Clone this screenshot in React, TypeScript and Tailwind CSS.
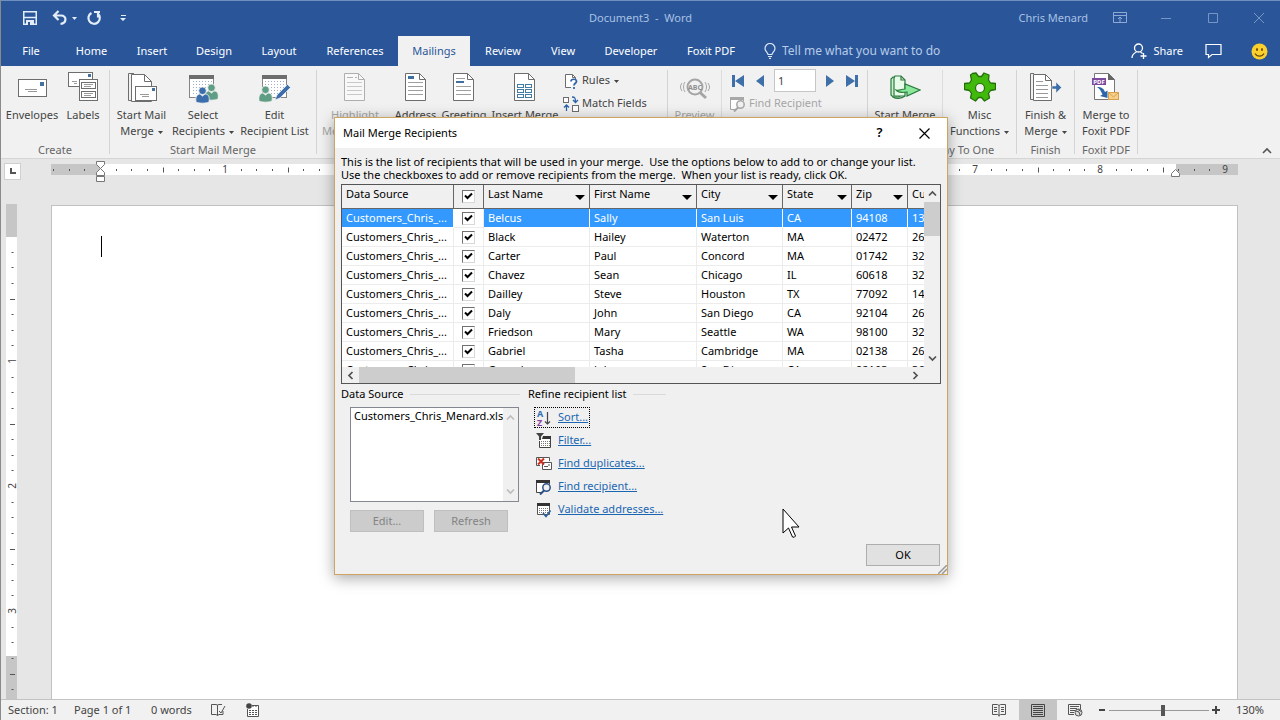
import React from "react";
import clsx from "clsx";

const TABS = [
  { title: "File", width: "w-[60px]" },
  { title: "Home", width: "w-[61px]" },
  { title: "Insert", width: "w-[60px]" },
  { title: "Design", width: "w-[64px]" },
  { title: "Layout", width: "w-[66px]" },
  { title: "References", width: "w-[86px]" },
  { title: "Mailings", width: "w-[72px]" },
  { title: "Review", width: "w-[66px]" },
  { title: "View", width: "w-[54px]" },
  { title: "Developer", width: "w-[82px]" },
  { title: "Foxit PDF", width: "w-[78px]" },
];

const COLUMNS = [
  { title: "Last Name", width: "w-[106px]" },
  { title: "First Name", width: "w-[107px]" },
  { title: "City", width: "w-[86px]" },
  { title: "State", width: "w-[69px]" },
  { title: "Zip", width: "w-[56px]" },
  { title: "Cu", width: "w-[40px]" },
];

const RECIPIENTS = [
  ["Belcus", "Sally", "San Luis", "CA", "94108", "13"],
  ["Black", "Hailey", "Waterton", "MA", "02472", "26"],
  ["Carter", "Paul", "Concord", "MA", "01742", "32"],
  ["Chavez", "Sean", "Chicago", "IL", "60618", "32"],
  ["Dailley", "Steve", "Houston", "TX", "77092", "14"],
  ["Daly", "John", "San Diego", "CA", "92104", "26"],
  ["Friedson", "Mary", "Seattle", "WA", "98100", "32"],
  ["Gabriel", "Tasha", "Cambridge", "MA", "02138", "26"],
  ["Gonzalez", "John", "San Diego", "CA", "92103", "36"],
];

const Caret = () => (
  <svg width="5" height="3" viewBox="0 0 5 3" className="ml-1 inline-block align-middle">
    <path d="M0 0h5L2.500 3z" fill="currentColor" />
  </svg>
);

/* ---------- ribbon icons ---------- */

const EnvelopeIcon = () => (
  <svg width="32" height="32" fill="none" stroke="#6d6d6d">
    <rect x="2.500" y="7.500" width="28" height="17" fill="#fff" />
    <rect x="24" y="10" width="4" height="4" fill="#41719c" stroke="none" />
    <path d="M9 17.500h12M12 19.500h9" stroke="#9a9a9a" />
  </svg>
);

const LabelsIcon = () => (
  <svg width="32" height="32" fill="none" stroke="#6d6d6d">
    <rect x="1.500" y="0.500" width="24" height="14" fill="#fff" />
    <rect x="21" y="2" width="3" height="3" fill="#41719c" stroke="none" />
    <path d="M5 9.500h5M7 11.500h3" stroke="#9a9a9a" />
    <rect x="12.500" y="7.500" width="18" height="21" fill="#fff" />
    <rect x="14.500" y="10.500" width="14" height="6" />
    <rect x="14.500" y="19.500" width="14" height="6" />
    <path d="M17 12.500h9M17 14.500h7M17 21.500h9M17 23.500h7" stroke="#9a9a9a" />
  </svg>
);

const StartMailMergeIcon = () => (
  <svg width="32" height="32" fill="none" stroke="#6d6d6d">
    <path d="M8 1.500H2.500v27H6" />
    <path d="M5.500 2.500h13l7 7v20h-20z" fill="#fff" />
    <path d="M18.500 2.500v7h7" />
    <rect x="9.500" y="14.500" width="21" height="14" fill="#fff" />
    <rect x="26" y="16" width="3" height="3" fill="#41719c" stroke="none" />
    <path d="M14 22.500h9M16 24.500h7" stroke="#9a9a9a" />
  </svg>
);

const PersonShape = ({ x, y, color }: { x: number; y: number; color: string }) => (
  <g transform={`translate(${x} ${y})`} fill={color} stroke="#f1f1f1" strokeWidth="0.800">
    <path d="M0 15c-1-6 2-8 4-8l2.500 2L9 7c3 0 5 2 4 8-2 1.500-11 1.500-13 0z" />
    <circle cx="6.500" cy="3.800" r="3.800" />
  </g>
);

const DotGrid = () => (
  <path
    d="M6 9.500h20M6 12.500h20M6 15.500h20M6 18.500h20M6 21.500h20"
    stroke="#9dafc4"
    strokeDasharray="1 2"
  />
);

const SelectRecipientsIcon = () => (
  <svg width="32" height="32" fill="none">
    <rect x="2.500" y="3.500" width="24" height="22" fill="#fff" stroke="#858585" />
    <path d="M2 3h25v4H2z" fill="#6d6d6d" />
    <DotGrid />
    <PersonShape x={18} y={12} color="#5f9e84" />
    <PersonShape x={9} y={15} color="#3c6eab" />
  </svg>
);

const EditRecipientsIcon = () => (
  <svg width="32" height="32" fill="none">
    <rect x="3.500" y="3.500" width="24" height="22" fill="#fff" stroke="#858585" />
    <path d="M3 3h25v4H3z" fill="#6d6d6d" />
    <DotGrid />
    <PersonShape x={0} y={14} color="#5f9e84" />
    <path d="M16 28l2-5L28.500 12.500l3 3L21 26z" fill="#3c6eab" stroke="#f1f1f1" strokeWidth="0.700" />
  </svg>
);

const PageIcon = ({ kind }: { kind: "highlight" | "address" | "greeting" | "field" }) => (
  <svg width="32" height="32" fill="none" className={kind === "highlight" ? "opacity-50" : ""}>
    <path d="M5.500 1.500h14l6 6v21h-20z" fill="#fff" stroke="#6d6d6d" />
    <path d="M19.500 1.500v6h6" stroke="#6d6d6d" />
    {kind === "field" ? (
      <g stroke="#3f7ba5">
        <rect x="8.500" y="12.500" width="6" height="3" />
        <rect x="16.500" y="12.500" width="6" height="3" />
        <rect x="8.500" y="17.500" width="6" height="3" />
        <rect x="16.500" y="17.500" width="6" height="3" />
        <rect x="8.500" y="22.500" width="6" height="3" />
        <rect x="16.500" y="22.500" width="6" height="3" />
      </g>
    ) : (
      <>
        <path
          d={kind === "greeting" ? "M8 6.500h9M8 14.500h15M8 18.500h15M8 22.500h15" : "M8 10.500h15M8 14.500h15M8 18.500h15M8 22.500h15"}
          stroke="#a0a0a0"
        />
        {kind === "address" && <path d="M8 4h6v3H8z" fill="#3f6f9f" />}
        {kind === "greeting" && <path d="M8 9h8v2H8z" fill="#3f6f9f" />}
        {kind === "highlight" && <path d="M8 5h6v1H8zM16 5h2v1h-2z" fill="#777" />}
      </>
    )}
  </svg>
);

const RulesIcon = () => (
  <svg width="16" height="16" fill="none">
    <path d="M8 14.500H2.500v-13h7l3 3v2" fill="#fff" stroke="#6d6d6d" />
    <path d="M9.500 1.500v3h3" stroke="#6d6d6d" />
    <path d="M8 8.500c0-3 5.500-3 5.500 0 0 2-2.500 1.500-2.500 4M11 14v2" stroke="#2b62a8" strokeWidth="1.700" />
  </svg>
);

const MatchIcon = () => (
  <svg width="16" height="16" fill="none" stroke="#6d6d6d">
    <rect x="0.500" y="1.500" width="5" height="5" fill="#fff" />
    <rect x="9.500" y="9.500" width="6" height="6" fill="#fff" />
    <path d="M9 1c3 0 3.500 1 3.500 5M10 4l2.500 2.500L15 4M3.500 15V9.500M1 11.500L3.500 9 6 11.500" stroke="#2b62a8" strokeWidth="1.300" />
  </svg>
);

const UpdateIcon = () => (
  <svg width="16" height="16" fill="none" stroke="#a0a0a0">
    <rect x="1.500" y="2.500" width="12" height="11" fill="#fff" />
    <path d="M4 6.500h7M4 9.500h7" />
  </svg>
);

const PreviewIcon = () => (
  <svg width="32" height="32" fill="none" stroke="#a5a5a5">
    <circle cx="16" cy="15" r="7.500" strokeWidth="2" fill="#f1f1f1" />
    <path d="M21 20.500l6 5.500" strokeWidth="3" />
    <path d="M6 10c-2 3-2 7 0 10M3 11c-2 3-2 5 0 8M26 10c2 3 2 7 0 10M29 11c2 3 2 5 0 8" />
    <text x="16" y="18" fontSize="7" fontWeight="700" textAnchor="middle" fill="#8f8f8f" stroke="none">
      ABC
    </text>
  </svg>
);

const FindIcon = ({ muted }: { muted?: boolean }) => (
  <svg width="16" height="16" fill="none" stroke={muted ? "#a8a8a8" : "#444"}>
    <path d="M5 13.500H0.500v-12h13V5" fill="#fff" />
    <path d="M0 1h14v3H0z" fill={muted ? "#a8a8a8" : "#333"} stroke="none" />
    <circle cx="10.500" cy="8.500" r="3.700" fill="#f1f1f1" stroke={muted ? "#a8a8a8" : "#2c4f86"} strokeWidth="1.500" />
    <path d="M8 11.500L4 15.500" stroke={muted ? "#a8a8a8" : "#2c4f86"} strokeWidth="2" />
  </svg>
);

const StartMergeIcon = () => (
  <svg width="32" height="32" fill="none" stroke="#2a7a3e" strokeWidth="1.200">
    <path d="M4 5h6l2 2v16l-2 2H4L2 23V7z" fill="#c9efce" />
    <path d="M6 4h6l4 4v16H5V6z" fill="#e8fbe9" />
    <path d="M12 4v4h4" />
    <path d="M7 18c3 1 5-1 9-1v-5l15 6-13 6v-4c-4 0-8 2-11-2z" fill="#8be79a" />
    <path d="M4 25c3 2 8 2 12-1" />
  </svg>
);

const GearIcon = () => (
  <svg width="32" height="32" viewBox="-16 -16 32 32">
    <path
      d="M-7.500-14.500l3.500-0.500 2.500 3.500h3l2.500-3.500 5 2-0.500 5 2 3 5 0.500v6l-5 1-2 3 1 4.500-5 3-3-3.500h-3l-3 3.500-5-3 1-4.500-2-3-5-1v-6l5-0.500 2-3-1-5z"
      fill="#41b80c"
      stroke="#256f0b"
      strokeWidth="1.300"
      strokeLinejoin="round"
    />
    <circle r="4.500" fill="#f1f1f1" stroke="#256f0b" strokeWidth="1.200" />
  </svg>
);

const FinishIcon = () => (
  <svg width="32" height="32" fill="none" stroke="#6d6d6d">
    <path d="M4 1.500H0.500v26H3" />
    <path d="M3.500 2.500h12l6 6v20h-18z" fill="#fff" />
    <path d="M15.500 2.500v6h6" />
    <path d="M6 9.500h7M6 13.500h12M6 17.500h12M6 21.500h12M6 25.500h12" stroke="#999" />
    <path d="M22 14h4v-4l5.500 5.500L26 21v-4h-4z" fill="#3c6eab" stroke="#f1f1f1" strokeWidth="0.500" />
  </svg>
);

const FoxitIcon = () => (
  <svg width="32" height="32" fill="none">
    <path d="M4.500 1.500h14l6 6v20h-20z" fill="#fff" stroke="#777" />
    <path d="M18 1l7 7h-7z" fill="#666" />
    <path d="M2 6h14v7H2z" fill="#7d4aa0" />
    <text x="9" y="12" fontSize="6" fontWeight="700" textAnchor="middle" fill="#fff">
      PDF
    </text>
    <path d="M7 15c5 0 7 2 8 5l2.500-1.500V26L10 24l2.500-1.500C11 19 10 17 7 15z" fill="#2f66a8" />
    <rect x="18.500" y="20.500" width="10" height="7" fill="#f6d08b" stroke="#d9a04a" />
    <path d="M19 21l4.500 4L28 21" stroke="#d9a04a" />
  </svg>
);

/* ---------- ribbon pieces ---------- */

type RibbonButtonProps = {
  icon: React.ReactNode;
  lines: [string, string?];
  width: string;
  caret?: boolean;
  muted?: boolean;
};

const RibbonButton = ({ icon, lines, width, caret, muted }: RibbonButtonProps) => (
  <button
    className={clsx(
      "flex shrink-0 flex-col items-center pt-[6px] leading-4 whitespace-nowrap",
      width,
      muted ? "text-[#a6a6a6]" : "text-[#444]"
    )}
  >
    <span className="mb-[3px] h-8">{icon}</span>
    <span>{lines[0]}</span>
    <span>
      {lines[1]}
      {caret && <Caret />}
    </span>
  </button>
);

const SmallButton = ({
  icon,
  title,
  caret,
  muted,
}: {
  icon: React.ReactNode;
  title: string;
  caret?: boolean;
  muted?: boolean;
}) => (
  <button
    className={clsx(
      "flex h-[23px] items-center gap-[3px] whitespace-nowrap",
      muted ? "text-[#a6a6a6]" : "text-[#444]"
    )}
  >
    {icon}
    <span>
      {title}
      {caret && <Caret />}
    </span>
  </button>
);

const RibbonGroup = ({
  title,
  width,
  children,
}: {
  title: string;
  width: string;
  children: React.ReactNode;
}) => (
  <>
    <div className={clsx("flex shrink-0 flex-col", width)}>
      <div className="flex h-[76px] justify-center">{children}</div>
      <div className="h-4 text-center leading-4 whitespace-nowrap text-[#666]">{title}</div>
    </div>
    <div className="my-1 w-px shrink-0 bg-[#d4d4d4]" />
  </>
);

const NavArrow = ({ label, d }: { label: string; d: string }) => (
  <button aria-label={label}>
    <svg width="14" height="14" fill="#3f6fa8">
      <path d={d} />
    </svg>
  </button>
);

const Ribbon = () => (
  <div className="flex h-[93px] shrink-0 overflow-hidden border-b border-[#d5d5d5] bg-[#f1f1f1] text-[11px]">
    <RibbonGroup title="Create" width="w-[108px]">
      <RibbonButton icon={<EnvelopeIcon />} lines={["Envelopes"]} width="w-[56px]" />
      <RibbonButton icon={<LabelsIcon />} lines={["Labels"]} width="w-[46px]" />
    </RibbonGroup>
    <RibbonGroup title="Start Mail Merge" width="w-[206px]">
      <RibbonButton icon={<StartMailMergeIcon />} lines={["Start Mail", "Merge"]} width="w-[60px]" caret />
      <RibbonButton icon={<SelectRecipientsIcon />} lines={["Select", "Recipients"]} width="w-[63px]" caret />
      <RibbonButton icon={<EditRecipientsIcon />} lines={["Edit", "Recipient List"]} width="w-[80px]" />
    </RibbonGroup>
    <RibbonGroup title="Write & Insert Fields" width="w-[350px]">
      <RibbonButton icon={<PageIcon kind="highlight" />} lines={["Highlight", "Merge Fields"]} width="w-[76px]" muted />
      <RibbonButton icon={<PageIcon kind="address" />} lines={["Address", "Block"]} width="w-[45px]" />
      <RibbonButton icon={<PageIcon kind="greeting" />} lines={["Greeting", "Line"]} width="w-[52px]" />
      <RibbonButton icon={<PageIcon kind="field" />} lines={["Insert Merge", "Field"]} width="w-[70px]" caret />
      <div className="flex flex-1 flex-col pt-[3px] pl-[3px]">
        <SmallButton icon={<RulesIcon />} title="Rules" caret />
        <SmallButton icon={<MatchIcon />} title="Match Fields" />
        <SmallButton icon={<UpdateIcon />} title="Update Labels" muted />
      </div>
    </RibbonGroup>
    <RibbonGroup title="Preview Results" width="w-[199px]">
      <RibbonButton icon={<PreviewIcon />} lines={["Preview", "Results"]} width="w-[53px]" muted />
      <div className="my-1 w-px bg-[#dcdcdc]" />
      <div className="flex flex-1 flex-col pt-[3px] pl-2">
        <div className="flex h-[23px] items-center gap-2">
          <NavArrow label="First record" d="M2 1h3v12H2zM14 1v12L5 7z" />
          <NavArrow label="Previous record" d="M12 1v12L4 7z" />
          <input
            aria-label="Record"
            defaultValue="1"
            className="h-[23px] w-[42px] border border-[#c6c6c6] bg-white px-[3px] text-[#444]"
          />
          <NavArrow label="Next record" d="M2 1v12l8-6z" />
          <NavArrow label="Last record" d="M12 1H9v12h3zM0 1v12l9-6z" />
        </div>
        <SmallButton icon={<FindIcon muted />} title="Find Recipient" muted />
        <SmallButton icon={<UpdateIcon />} title="Check for Errors" muted />
      </div>
    </RibbonGroup>
    <RibbonGroup title="Merge Many To One" width="w-[148px]">
      <RibbonButton icon={<StartMergeIcon />} lines={["Start Merge", "To One"]} width="w-[74px]" />
      <div className="my-1 w-px bg-[#dcdcdc]" />
      <RibbonButton icon={<GearIcon />} lines={["Misc", "Functions"]} width="w-[73px]" caret />
    </RibbonGroup>
    <RibbonGroup title="Finish" width="w-[57px]">
      <RibbonButton icon={<FinishIcon />} lines={["Finish &", "Merge"]} width="w-[57px]" caret />
    </RibbonGroup>
    <RibbonGroup title="Foxit PDF" width="w-[62px]">
      <RibbonButton icon={<FoxitIcon />} lines={["Merge to", "Foxit PDF"]} width="w-[62px]" />
    </RibbonGroup>
    <button aria-label="Collapse the ribbon" className="mt-auto mr-2 mb-1 ml-auto">
      <svg width="10" height="7" fill="none" stroke="#555" strokeWidth="1.600">
        <path d="M1 6l4-4 4 4" />
      </svg>
    </button>
  </div>
);

/* ---------- title bar and tabs ---------- */

const TitleBar = () => (
  <div className="grid h-[35px] shrink-0 grid-cols-[1fr_auto_1fr] items-center border-t border-[#6f8fc0] text-[11px] text-[#a9c1e4]">
    <div className="flex items-center pl-[21px] text-[#e3ecf8]">
      <button aria-label="Save">
        <svg width="16" height="16" fill="none" stroke="currentColor" strokeWidth="1.500">
          <path d="M1.750 1.750h12.500v12.500H1.750z" />
          <path d="M2 7.500h12" />
          <path d="M4 10h8v4H4z" fill="currentColor" stroke="none" />
          <path d="M6 12h2v3H6z" fill="#2a5699" stroke="none" />
        </svg>
      </button>
      <button aria-label="Undo" className="ml-[13px] flex items-center">
        <svg width="17" height="16" fill="none" stroke="currentColor" strokeWidth="2.200">
          <path d="M7.500 1L3 5.500 7.500 10M3 5.500h7c6 0 6 7.500-0.500 8.500" />
        </svg>
        <Caret />
      </button>
      <button aria-label="Repeat" className="ml-[9px]">
        <svg width="16" height="16" fill="none" stroke="currentColor" strokeWidth="2.200">
          <path d="M5.500 3a5.700 5.700 0 1 0 6 0.500M8 2h6M12 1.500v6" />
        </svg>
      </button>
      <button aria-label="Customize" className="ml-[18px]">
        <svg width="7" height="8" fill="currentColor">
          <path d="M1 1h5v1H1zM0 4h6L3 7z" />
        </svg>
      </button>
    </div>
    <div className="whitespace-pre">Document3  -  Word</div>
    <div className="flex items-center justify-end pr-4">
      <span className="mr-[25px]">Chris Menard</span>
      <button aria-label="Ribbon display options" className="mr-[34px]">
        <svg width="14" height="12" fill="none" stroke="currentColor" className="opacity-80">
          <path d="M0.500 0.500h13v10H0.500zM0 3.500h14M7 10V5M5 7l2-2 2 2" />
        </svg>
      </button>
      <button aria-label="Minimize" className="mr-[37px]">
        <svg width="10" height="10" stroke="currentColor" className="opacity-60">
          <path d="M0 5.500h10" />
        </svg>
      </button>
      <button aria-label="Maximize" className="mr-[36px]">
        <svg width="10" height="10" fill="none" stroke="currentColor" className="opacity-60">
          <path d="M0.500 0.500h9v9h-9z" />
        </svg>
      </button>
      <button aria-label="Close">
        <svg width="10" height="10" stroke="currentColor" className="opacity-60">
          <path d="M0 0l10 10M10 0L0 10" />
        </svg>
      </button>
    </div>
  </div>
);

const TabBar = () => (
  <div className="flex h-[31px] shrink-0 items-end text-[12px] whitespace-nowrap text-white">
    {TABS.map((tab) => (
      <button
        key={tab.title}
        className={clsx(
          "h-[30px] shrink-0 text-[11px]",
          tab.width,
          tab.title === "Mailings" ? "bg-[#f1f1f1] text-[#2a5699]" : "text-white"
        )}
      >
        {tab.title}
      </button>
    ))}
    <label className="ml-[14px] flex h-[30px] items-center gap-[6px]">
      <svg width="12" height="16" fill="none" stroke="#dbe6f5" strokeWidth="1.200">
        <path d="M4 11.500c0-2-3-3-3-6a5 5 0 0 1 10 0c0 3-3 4-3 6zM4 13.500h4M5 15.400h2" />
      </svg>
      <input
        placeholder="Tell me what you want to do"
        className="w-[170px] bg-transparent outline-none placeholder:text-[#b7cbe8]"
      />
    </label>
    <div className="ml-auto flex h-[30px] items-center pr-3 text-[11px]">
      <button className="flex items-center gap-[6px]">
        <svg width="16" height="16" fill="none" stroke="#fff" strokeWidth="1.300">
          <circle cx="7.500" cy="5" r="4" />
          <path d="M1 15c0-3 2-5 4.500-6M9.500 9l2 1.500M12.500 10v6M9.500 13h6" />
        </svg>
        Share
      </button>
      <button aria-label="Comments" className="ml-[22px]">
        <svg width="17" height="16" fill="none" stroke="#fff" strokeWidth="1.200">
          <path d="M1 1.500h15v10H7l-3.500 3v-3H1z" />
        </svg>
      </button>
      <button aria-label="Feedback" className="ml-[29px]">
        <svg width="17" height="17">
          <circle cx="8.500" cy="8.500" r="8" fill="#fbd02d" />
          <ellipse cx="6" cy="6.500" rx="1" ry="1.600" fill="#6b4a0c" />
          <ellipse cx="11" cy="6.500" rx="1" ry="1.600" fill="#6b4a0c" />
          <path d="M4 10.500c2 3.500 7 3.500 9 0" fill="none" stroke="#6b4a0c" strokeWidth="1.200" />
        </svg>
      </button>
    </div>
  </div>
);

/* ---------- rulers and page ---------- */

const INCH = 125;

const RulerMarks = ({ from, to, zero, vertical }: { from: number; to: number; zero: number; vertical?: boolean }) => {
  const marks: number[] = [];
  for (let i = from; i <= to; i++) marks.push(i);

  return (
    <svg className="absolute inset-0 h-full w-full overflow-visible" stroke="#555" fill="#444">
      {marks.map((i) => {
        const pos = Math.round(zero + (i * INCH) / 8);
        if (i === 0) return null;
        if (i % 8 === 0) {
          return vertical ? (
            <text key={i} fontSize="10" stroke="none" textAnchor="middle" transform={`translate(10 ${pos}) rotate(-90)`}>
              {Math.abs(i / 8)}
            </text>
          ) : (
            <text key={i} x={pos} y="9" fontSize="10" stroke="none" textAnchor="middle">
              {Math.abs(i / 8)}
            </text>
          );
        }
        const half = i % 4 === 0 ? 2.5 : 1;
        return vertical ? (
          <path key={i} d={`M${6.5 - half} ${pos + 0.5}h${half * 2}`} />
        ) : (
          <path key={i} d={`M${pos + 0.5} ${6 - half}v${half * 2}`} />
        );
      })}
    </svg>
  );
};

const HorizontalRuler = () => (
  <div className="flex h-[25px] shrink-0 pt-[4px]">
    <div className="ml-[3px] flex h-[17px] w-[17px] items-center justify-center border border-[#d0d0d0] bg-white">
      <svg width="7" height="7" fill="none" stroke="#555" strokeWidth="2">
        <path d="M2 0v5h5" />
      </svg>
    </div>
    <div className="relative mt-[1px] mr-[42px] ml-[30px] flex h-[11px] flex-1">
      <div className="w-[50px] bg-[#c6c6c6]" />
      <div className="flex-1 bg-white" />
      <div className="w-[62px] bg-[#c6c6c6]" />
      <RulerMarks from={-3} to={72} zero={49} />
      {/* indent markers */}
      <svg width="9" height="22" fill="#fff" stroke="#777" className="absolute -top-[3px] left-[45px]">
        <path d="M0.500 0.500h8v3l-4 4-4-4zM4.500 7.500l4 4v3h-8v-3zM0.500 15.500h8v5h-8z" />
      </svg>
      <svg width="9" height="8" fill="#fff" stroke="#777" className="absolute top-[5px] right-[58px]">
        <path d="M4.500 0.500l4 4v3h-8v-3z" />
      </svg>
    </div>
  </div>
);

const DocumentArea = () => (
  <div className="flex min-h-0 flex-1 overflow-hidden">
    <div className="relative mt-5 ml-[5px] flex w-[11px] shrink-0 flex-col">
      <div className="h-[33px] bg-[#c6c6c6]" />
      <div className="h-[419px] bg-white" />
      <div className="flex-1 bg-[#c6c6c6]" />
      <RulerMarks from={1} to={29} zero={32} vertical />
    </div>
    <div className="mt-[21px] mr-[42px] ml-[34px] flex-1 border border-b-0 border-[#c1c1c1] bg-white pt-[30px] pl-[49px]">
      <div className="h-[21px] w-px bg-black" />
    </div>
  </div>
);

const StatusBar = () => (
  <div className="flex h-[21px] shrink-0 items-center border-t border-[#c3c3c3] bg-[#f1f1f1] pl-[7px] text-[11px] text-[#444]">
    <span className="w-[66px]">Section: 1</span>
    <span className="w-[77px]">Page 1 of 1</span>
    <span className="w-[59px]">0 words</span>
    <button aria-label="Proofing">
      <svg width="16" height="14" fill="none" stroke="#555">
        <path d="M7.500 12.500V2L6 1.500H1.500v10H6l1.500 1 1.500-1h4V8M7.500 2L9 1.500h3M9 8l2 2 4-7" />
      </svg>
    </button>
    <button aria-label="Record macro" className="ml-[20px]">
      <svg width="14" height="14" fill="none" stroke="#555">
        <path d="M1.500 6v7.500h11v-11H6" fill="#fff" />
        <path d="M6 3h6.500M3 7.500h8M3 9.500h8M3 11.500h8" strokeDasharray="2 1" />
        <circle cx="3" cy="3" r="2.800" fill="#444" stroke="none" />
      </svg>
    </button>
    <div className="ml-auto flex h-full items-center pr-[16px]">
      <button aria-label="Read mode" className="mr-[13px]">
        <svg width="14" height="13" fill="none" stroke="#555">
          <path d="M7 12.500v-11L5.500 0.500h-5v10h5l1.500 1 1.500-1h5v-10h-5L7 1.500M2 3.500h3M2 5.500h3M2 7.500h3M9 3.500h3M9 5.500h3M9 7.500h3" />
        </svg>
      </button>
      <button aria-label="Print layout" className="flex h-full w-[38px] items-center justify-center bg-[#c5c5c5]">
        <svg width="14" height="13" fill="none" stroke="#444">
          <path d="M0.500 0.500h13v12h-13zM2 2.500h10M2 4.500h10M2 6.500h10M2 8.500h10M2 10.500h10" />
        </svg>
      </button>
      <button aria-label="Web layout" className="ml-[11px]">
        <svg width="15" height="13" fill="none" stroke="#555">
          <path d="M6 10.500H0.500v-10h12V5M2 2.500h9M2 4.500h7M2 6.500h5M2 8.500h4" />
          <circle cx="10.500" cy="8.500" r="3.500" fill="#ddd" />
          <path d="M8 7l3 1 1 3M10 5.500l3 2" />
        </svg>
      </button>
      <button aria-label="Zoom out" className="ml-[15px]">
        <svg width="8" height="8" stroke="#444" strokeWidth="2">
          <path d="M1 4h6" />
        </svg>
      </button>
      <input
        type="range"
        aria-label="Zoom"
        defaultValue={54}
        className="mx-[3px] h-3 w-[100px] appearance-none bg-transparent [&::-webkit-slider-runnable-track]:h-px [&::-webkit-slider-runnable-track]:bg-[#999] [&::-webkit-slider-thumb]:-mt-[5px] [&::-webkit-slider-thumb]:h-[11px] [&::-webkit-slider-thumb]:w-[4px] [&::-webkit-slider-thumb]:appearance-none [&::-webkit-slider-thumb]:bg-[#555]"
      />
      <button aria-label="Zoom in" className="mr-[16px]">
        <svg width="8" height="8" stroke="#444" strokeWidth="2">
          <path d="M0 4h8M4 0v8" />
        </svg>
      </button>
      <span>130%</span>
    </div>
  </div>
);

/* ---------- dialog ---------- */

const CheckBox = ({ label }: { label: string }) => (
  <label className="relative mx-auto block h-[13px] w-[13px]">
    <input
      type="checkbox"
      defaultChecked
      aria-label={label}
      className="peer block h-[13px] w-[13px] appearance-none border border-t-[#707070] border-r-[#d8d8d8] border-b-[#d8d8d8] border-l-[#707070] bg-white"
    />
    <svg
      width="9"
      height="8"
      fill="none"
      stroke="#000"
      strokeWidth="2"
      className="pointer-events-none absolute top-[2px] left-[2px] hidden peer-checked:block"
    >
      <path d="M1 3.500l2.500 2.500L8 1.500" />
    </svg>
  </label>
);

const Chevron = ({ d, color = "#505050" }: { d: string; color?: string }) => (
  <svg width="9" height="9" fill="none" stroke={color} strokeWidth="1.700">
    <path d={d} />
  </svg>
);

const UP = "M1 6.500L4.500 3 8 6.500";
const DOWN = "M1 2.500L4.500 6 8 2.500";

const RecipientTable = () => (
  <div className="grid h-[200px] grid-cols-[1fr_16px] grid-rows-[1fr_16px] border border-[#555] bg-[#f0f0f0] text-[11px]">
    <div className="overflow-hidden bg-white">
      <table className="w-[606px] table-fixed border-separate border-spacing-0 text-black">
        <thead>
          <tr className="h-[24px] bg-[#f0f0f0] text-left">
            <th className="w-[112px] border-r border-b border-[#666] p-0 pb-1 pl-1 font-normal">Data Source</th>
            <th className="w-[30px] border-r border-b border-[#666] p-0">
              <CheckBox label="All recipients" />
            </th>
            {COLUMNS.map((column) => (
              <th key={column.title} className={clsx("border-r border-b border-[#666] p-0 pb-1 pl-1 font-normal", column.width)}>
                <button className="flex w-full items-end justify-between pr-[4px]">
                  {column.title}
                  <svg width="10" height="8">
                    <path d="M0 0h10L5 5z" />
                  </svg>
                </button>
              </th>
            ))}
          </tr>
        </thead>
        <tbody>
          {RECIPIENTS.map((row, index) => {
            const cell = clsx(
              "overflow-hidden border-r border-b p-0 pl-1 leading-[18px] whitespace-nowrap",
              index === 0 ? "border-white bg-[#3399ff] text-white" : "border-[#ececec]"
            );
            return (
              <tr key={index} className="h-[19px]">
                <td className={cell}>Customers_Chris_...</td>
                <td className="border-r border-b border-[#ececec] p-0">
                  <CheckBox label={`${row[1]} ${row[0]}`} />
                </td>
                {row.map((value, i) => (
                  <td key={i} className={cell}>
                    {value}
                  </td>
                ))}
              </tr>
            );
          })}
        </tbody>
      </table>
    </div>
    <div className="flex flex-col items-center">
      <button aria-label="Scroll up" className="flex h-[17px] items-center">
        <Chevron d={UP} />
      </button>
      <div className="h-[34px] w-full bg-[#cdcdcd]" />
      <button aria-label="Scroll down" className="mt-auto flex h-[17px] items-center">
        <Chevron d={DOWN} />
      </button>
    </div>
    <div className="flex items-center">
      <button aria-label="Scroll left" className="flex w-[17px] justify-center">
        <Chevron d="M6.500 1L3 4.500 6.500 8" />
      </button>
      <div className="h-full w-[216px] bg-[#cdcdcd]" />
      <button aria-label="Scroll right" className="ml-auto flex w-[17px] justify-center">
        <Chevron d="M2.500 1L6 4.500 2.500 8" />
      </button>
    </div>
  </div>
);

const SortIcon = () => (
  <svg width="16" height="18" fill="none">
    <text x="1" y="8" fontSize="9" fill="#2f6fb5" fontWeight="700">
      A
    </text>
    <text x="1" y="17" fontSize="9" fill="#8a3f9c" fontWeight="700">
      Z
    </text>
    <path d="M11.500 3v12M9 12.500l2.500 2.500 2.500-2.500" stroke="#444" strokeWidth="1.200" />
  </svg>
);

const FilterIcon = () => (
  <svg width="16" height="16" fill="none">
    <path d="M3.500 8v6.500h11v-10H7" fill="#fff" stroke="#444" />
    <path d="M7 3h8v3H6z" fill="#333" />
    <path d="M5 8.500h9M5 10.500h9M5 12.500h9" stroke="#777" strokeDasharray="1 1" />
    <path d="M0 0h8L5 3.500V7H3V3.500z" fill="#444" />
  </svg>
);

const DuplicatesIcon = () => (
  <svg width="16" height="16" fill="none" stroke="#555">
    <path d="M4 9.500H0.500v-8h13V5" fill="#fff" />
    <path d="M6.500 6.500h9v7h-9z" fill="#fff" />
    <path d="M8 10.500h4M13 8v2" />
    <path d="M2 2.500l6 6M8 2.500l-6 6" stroke="#c8321e" strokeWidth="2" />
  </svg>
);

const ValidateIcon = () => (
  <svg width="16" height="16" fill="none">
    <path d="M1.500 1.500h12v11h-12z" fill="#fff" stroke="#555" />
    <path d="M1 1h13v3H1z" fill="#333" />
    <path d="M3 6.500h10M3 8.500h10M3 10.500h10" stroke="#777" strokeDasharray="1 1" />
    <path d="M7 11l3 3.500 4.500-6" stroke="#2f5f9e" strokeWidth="1.700" />
  </svg>
);

const REFINE_LINKS = [
  { title: "Sort...", icon: <SortIcon /> },
  { title: "Filter...", icon: <FilterIcon /> },
  { title: "Find duplicates...", icon: <DuplicatesIcon /> },
  { title: "Find recipient...", icon: <FindIcon /> },
  { title: "Validate addresses...", icon: <ValidateIcon /> },
];

const SectionTitle = ({ title }: { title: string }) => (
  <div className="flex h-[18px] items-center gap-[6px] whitespace-nowrap">
    {title}
    <span className="h-px flex-1 bg-[#dadada]" />
  </div>
);

const MergeDialog = () => (
  <div
    role="dialog"
    aria-label="Mail Merge Recipients"
    className="relative flex h-[458px] w-[614px] flex-col border border-[#cda561] bg-[#f0f0f0] text-[11px] text-black shadow-[0_3px_14px_rgba(0,0,0,0.35)]"
  >
    <div className="flex h-[30px] shrink-0 items-center bg-white pl-2">
      <h1>Mail Merge Recipients</h1>
      <button aria-label="Help" className="ml-auto w-[45px] text-[13px] font-semibold">
        ?
      </button>
      <button aria-label="Close dialog" className="flex w-[45px] justify-center">
        <svg width="11" height="11" stroke="#000" strokeWidth="1.200">
          <path d="M0.500 0.500l10 10M10.500 0.500l-10 10" />
        </svg>
      </button>
    </div>
    <div className="px-[6px] pt-[7px]">
      <p className="mb-[3px] leading-[13px] whitespace-pre">
        {"This is the list of recipients that will be used in your merge.  Use the options below to add to or change your list.\nUse the checkboxes to add or remove recipients from the merge.  When your list is ready, click OK."}
      </p>
      <RecipientTable />
      <div className="flex pt-px">
        <section className="w-[179px]">
          <SectionTitle title="Data Source" />
          <div className="mt-1 ml-[9px] flex h-[95px] w-[169px] border border-[#828790] bg-white">
            <ul className="flex-1 pl-[3px] leading-4 whitespace-nowrap">
              <li>Customers_Chris_Menard.xls</li>
            </ul>
            <div className="flex w-[16px] flex-col items-center justify-between bg-[#f0f0f0] py-[5px]">
              <Chevron d={UP} color="#bdbdbd" />
              <Chevron d={DOWN} color="#bdbdbd" />
            </div>
          </div>
          <div className="mt-2 ml-[9px] flex gap-[10px]">
            <button disabled className="h-[22px] w-[74px] border border-[#bfbfbf] bg-[#ccc] text-[#838383]">
              Edit...
            </button>
            <button disabled className="h-[22px] w-[74px] border border-[#bfbfbf] bg-[#ccc] text-[#838383]">
              Refresh
            </button>
          </div>
        </section>
        <section className="ml-2 w-[138px]">
          <SectionTitle title="Refine recipient list" />
          <div className="mt-1 ml-[6px] flex flex-col items-start gap-[2px]">
            {REFINE_LINKS.map((link, index) => (
              <a
                key={link.title}
                href="#"
                className={clsx(
                  "flex h-[21px] items-center gap-[6px] border border-dotted px-px whitespace-nowrap text-[#1b66b0] underline",
                  index === 0 ? "border-black" : "border-transparent"
                )}
              >
                {link.icon}
                {link.title}
              </a>
            ))}
          </div>
        </section>
      </div>
    </div>
    <button className="mt-auto mr-[7px] mb-2 ml-auto h-[22px] w-[74px] border border-[#adadad] bg-[#e1e1e1]">OK</button>
    <svg width="9" height="9" stroke="#999" className="absolute right-0 bottom-0">
      <path d="M0 9L9 0M4 9l5-5" strokeWidth="1.500" />
    </svg>
    {/* mouse pointer */}
    <svg width="18" height="32" viewBox="0 0 18 32" className="absolute top-[390px] left-[447px]">
      <path
        d="M1 1v24l5.500-5 4 9q2 1 3-1L9.500 19H17z"
        fill="#fff"
        stroke="#000"
        strokeWidth="1"
      />
    </svg>
  </div>
);

export default function App() {
  return (
    <div className="relative flex h-screen w-full flex-col overflow-hidden border-l border-[#8a8a8a] bg-[#e6e6e6] font-['Noto_Sans','Open_Sans',sans-serif]">
      <header className="shrink-0 bg-[#2a5699]">
        <TitleBar />
        <TabBar />
      </header>
      <Ribbon />
      <HorizontalRuler />
      <DocumentArea />
      <StatusBar />
      <div className="absolute inset-0 flex items-start justify-center pt-[117px] pl-px">
        <MergeDialog />
      </div>
    </div>
  );
}
